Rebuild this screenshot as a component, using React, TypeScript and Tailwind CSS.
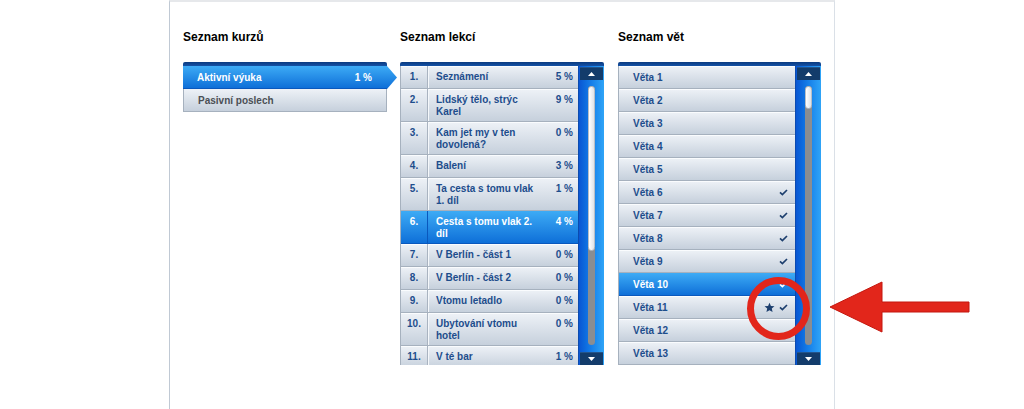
import clsx from "clsx";

type Lesson = { n: number; title: string; pct: string; active?: boolean };

const lessons: Lesson[] = [
  { n: 1, title: "Seznámení", pct: "5 %" },
  { n: 2, title: "Lidský tělo, strýc Karel", pct: "9 %" },
  { n: 3, title: "Kam jet my v ten dovolená?", pct: "0 %" },
  { n: 4, title: "Balení", pct: "3 %" },
  { n: 5, title: "Ta cesta s tomu vlak 1. díl", pct: "1 %" },
  { n: 6, title: "Cesta s tomu vlak 2. díl", pct: "4 %", active: true },
  { n: 7, title: "V Berlín - část 1", pct: "0 %" },
  { n: 8, title: "V Berlín - část 2", pct: "0 %" },
  { n: 9, title: "Vtomu letadlo", pct: "0 %" },
  { n: 10, title: "Ubytování vtomu hotel", pct: "0 %" },
  { n: 11, title: "V té bar", pct: "1 %" },
];

const sentences = Array.from({ length: 13 }, (_, i) => ({
  label: `Věta ${i + 1}`,
  done: [6, 7, 8, 9, 11].includes(i + 1),
  star: i + 1 === 11,
  active: i + 1 === 10,
}));

const rowIdle =
  "bg-linear-to-b from-[#eef2f7] to-[#c6d0dc] border-b border-[#a6b1be] text-[#1d4d8c] shadow-[inset_0_1px_0_#fafcfe]";
const rowActive =
  "bg-linear-to-b from-[#3dabf5] to-[#0e6fd8] border-b border-[#0a58bd] text-white";

function Heading({ children }: { children: string }) {
  return <h2 className="text-[12px] leading-[14px] font-bold text-black h-[32px]">{children}</h2>;
}

function TopStrip() {
  return <div className="h-[4px] rounded-t-[2px] bg-linear-to-b from-[#0a3a80] to-[#1552a6]" />;
}

function Check({ white }: { white?: boolean }) {
  return (
    <svg width="9" height="7" viewBox="0 0 9 7" className="shrink-0">
      <path d="M1 3.4 L3.4 5.6 L8 1" fill="none" stroke={white ? "#fff" : "#1d3f6e"} strokeWidth="1.7" />
    </svg>
  );
}

function Star() {
  return (
    <svg width="11" height="11" viewBox="0 0 24 24" className="shrink-0">
      <polygon
        points="12,1.5 15.1,8.6 22.8,9.3 17,14.4 18.7,22 12,18 5.3,22 7,14.4 1.2,9.3 8.9,8.6"
        fill="#1d3f6e"
      />
    </svg>
  );
}

function Arrow({ down }: { down?: boolean }) {
  return (
    <div className="mx-[1px] h-[13px] bg-[#133c6b] border-t border-[#24548a] flex items-center justify-center">
      <svg width="7" height="4" viewBox="0 0 7 4">
        <polygon points={down ? "0,0 7,0 3.5,4" : "0,4 7,4 3.5,0"} fill="#fff" />
      </svg>
    </div>
  );
}

function Scrollbar({ thumb }: { thumb: number }) {
  return (
    <div className="w-[26px] shrink-0 flex flex-col pt-[1px] bg-linear-to-r from-[#0a56d3] via-[#167fe9] to-[#2fa4f7] border-l border-[#0b4bb0]">
      <Arrow />
      <div className="flex-1 flex justify-center pt-[6px] pb-[7px]">
        <div className="w-[7px] h-full rounded-full bg-[#8a8d91] flex flex-col">
          <div
            className="w-full rounded-full bg-linear-to-r from-[#ffffff] to-[#dfe3e8] border border-[#b9bfc6]"
            style={{ height: thumb }}
          />
        </div>
      </div>
      <Arrow down />
    </div>
  );
}

function Courses() {
  return (
    <div className="w-[204px] shrink-0">
      <Heading>Seznam kurzů</Heading>
      <TopStrip />
      <div
        className={clsx(
          rowActive,
          "w-[214px] h-[23px] flex items-center justify-between pl-[14px] pr-[25px] text-[10px] font-bold [clip-path:polygon(0_0,calc(100%_-_10px)_0,100%_50%,calc(100%_-_10px)_100%,0_100%)]"
        )}
      >
        <span>Aktivní výuka</span>
        <span>1 %</span>
      </div>
      <div className="h-[23px] flex items-center pl-[14px] text-[10px] font-bold text-[#4b4f55] bg-linear-to-b from-[#eef2f7] to-[#c6d0dc] border border-t-0 border-[#a6b1be]">
        Pasivní poslech
      </div>
    </div>
  );
}

function Lessons() {
  return (
    <div className="w-[204px] shrink-0">
      <Heading>Seznam lekcí</Heading>
      <TopStrip />
      <div className="flex h-[299px] border-l border-[#a6b1be]">
        <div className="flex-1 overflow-hidden">
          {lessons.map((l) => (
            <div key={l.n} className={clsx(l.active ? rowActive : rowIdle, "flex min-h-[23px] text-[10px] leading-[12px] font-bold")}>
              <div
                className={clsx(
                  "w-[27px] shrink-0 text-center pt-[5px] pb-[3px] border-r",
                  l.active ? "border-[#0a58bd]" : "border-[#a9b3c0] shadow-[1px_0_0_#f5f8fb]"
                )}
              >
                {l.n}.
              </div>
              <div className="w-[108px] shrink-0 pl-[8px] pt-[5px] pb-[3px]">{l.title}</div>
              <div className="flex-1 text-right pr-[5px] pt-[5px] pb-[3px] whitespace-nowrap">{l.pct}</div>
            </div>
          ))}
        </div>
        <Scrollbar thumb={165} />
      </div>
    </div>
  );
}

function Sentences() {
  return (
    <div className="w-[203px] shrink-0 ml-[1px]">
      <Heading>Seznam vět</Heading>
      <TopStrip />
      <div className="flex h-[299px] border-l border-[#a6b1be]">
        <div className="flex-1 overflow-hidden">
          {sentences.map((s) => (
            <div
              key={s.label}
              className={clsx(
                s.active ? rowActive : rowIdle,
                "h-[23px] flex items-center pl-[14px] pr-[7px] text-[10px] font-bold"
              )}
            >
              <span className="flex-1">{s.label}</span>
              <div className="flex items-center gap-[4px]">
                {s.star && <Star />}
                {(s.done || s.active) && <Check white={s.active} />}
              </div>
            </div>
          ))}
        </div>
        <Scrollbar thumb={23} />
      </div>
    </div>
  );
}

export default function App() {
  return (
    <div className="relative w-[1024px] h-[409px] overflow-hidden bg-white font-['Liberation_Sans',Arial,sans-serif]">
      <div className="ml-[169px] w-[666px] h-full border-t-2 border-t-[#e6e8eb] border-l border-l-[#c0c9d4] border-r border-r-[#dae0e7] pl-[13px] pt-[28px] flex gap-[13px]">
        <Courses />
        <Lessons />
        <Sentences />
      </div>

      {/* annotation overlay */}
      <svg className="absolute inset-0 pointer-events-none" width="1024" height="409" viewBox="0 0 1024 409">
        <circle cx="778.5" cy="308.5" r="28" fill="none" stroke="#e2261b" strokeWidth="7" />
        <polygon
          points="830,307 882,282 882,302 969,302 969,312 882,312 882,332"
          fill="#e2261b"
          stroke="#c4170e"
          strokeWidth="1"
        />
      </svg>
    </div>
  );
}
